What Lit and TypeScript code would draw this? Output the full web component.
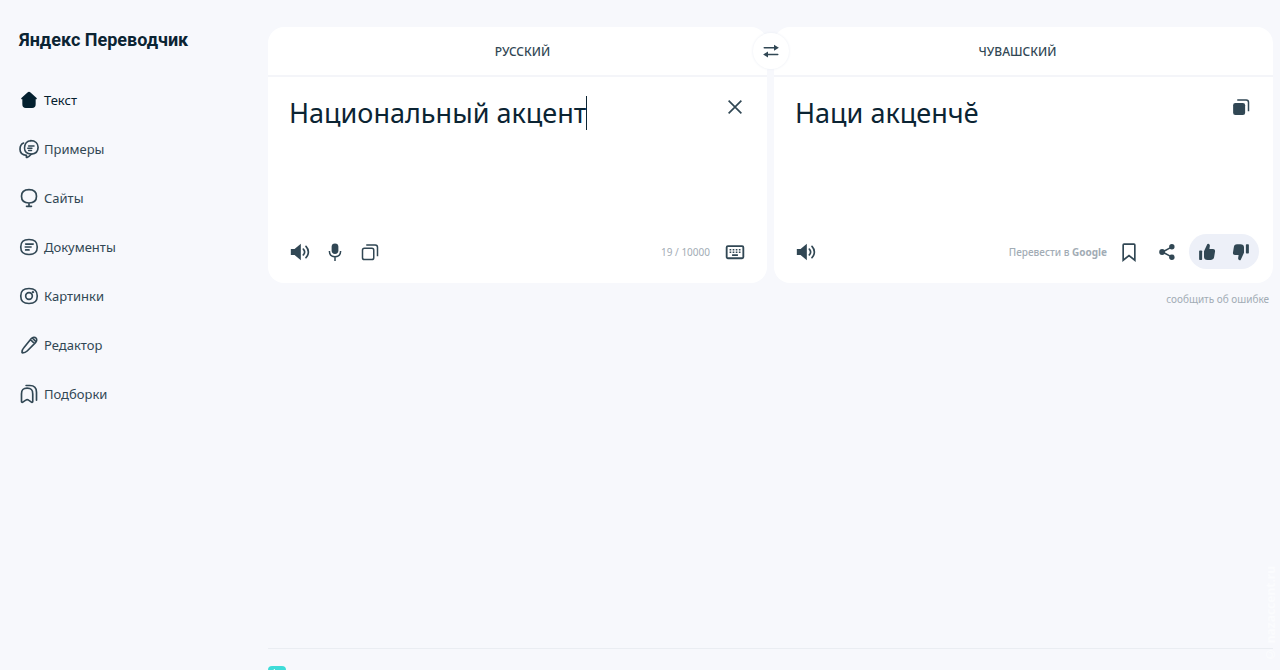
import { LitElement, html, css, svg } from "lit";
import { customElement, state } from "lit/decorators.js";

const line = (content: unknown, size = 24) => html`<svg
  width=${size} height=${size} viewBox="0 0 24 24" fill="none" stroke="currentColor"
  stroke-width="2" stroke-linecap="round" stroke-linejoin="round" aria-hidden="true">${content}</svg>`;

const icons = {
  text: line(svg`<path fill="currentColor" stroke="none" d="M10.2 3a2.700 2.700 0 0 1 3.600 0l7.300 6.700c.6.6.3 1.500-.6 1.500h-.5V17c0 3.100-1.500 4.500-4.300 4.500H8.200C5.400 21.500 4 20.100 4 17v-5.800h-.5c-.9 0-1.200-.9-.6-1.500z"/>`),
  examples: line(svg`<path d="M14 2c5.500 0 8.900 3.300 8.900 8s-3 7.900-8 8.100c-1.500 1.800-3.200 3.500-5.200 4-.8.200-1-.3-.9-1l.1-1.400C4.600 19.200 1.200 16.500 1.200 12.200 1.200 8.800 2.800 6 5.500 4.800"/><path d="M14.500 18c-5-.2-7.900-2.900-7.900-7.200C6.600 5.800 9.600 2 14 2M11.500 8.300h6.500M10.500 11h5M11.500 13.700h3.500" stroke-width="1.800"/>`),
  sites: line(svg`<path d="M12 2c6.300 0 9 2.700 9 8s-2.700 8-9 8-9-2.700-9-8 2.700-8 9-8zM12 18v3.500M9 22h6"/>`),
  documents: line(svg`<path d="M12 3c7.400 0 9.900 2.800 9.900 9s-2.500 9-9.900 9-9.900-2.800-9.900-9S4.600 3 12 3zM8 8.500h9M7.500 12h7M8 15.500h4"/>`),
  pictures: line(svg`<path d="M12 3c7.400 0 9.900 2.800 9.900 9s-2.500 9-9.900 9-9.900-2.800-9.900-9S4.600 3 12 3z"/><circle cx="12" cy="12" r="4"/><circle cx="16.600" cy="7.400" r="1" fill="currentColor" stroke-width="1"/>`),
  editor: line(svg`<path d="M14.800 4.200c1.700-1.700 4.300-1.900 5.600-.6s1.100 3.900-.6 5.600L9.800 19.200c-1.600 1.600-3.600 2.300-5.500 2.300-.5 0-.7-.2-.7-.7 0-1.900.7-3.900 2.200-5.500zM13.800 5.500l4.700 4.700M16 3.600l4.300 4.300"/>`),
  collections: line(svg`<path d="M3 12c0-5 1.700-7 6.800-7s6.700 2 6.700 7v9c0 .9-.9 1.300-1.600.7l-3.400-2.400c-1-.8-2.400-.8-3.400 0L4.600 21.700c-.7.600-1.600.2-1.600-.7zM8.500 1.800h4.500c5.500 0 8 2.800 8 8v9.700"/>`),
  swap: line(svg`<path d="M3 7.500h15M6 16.500h15"/><path stroke="none" fill="currentColor" d="M16 3.500l6.500 4-6.500 4zM8 12.500l-6.500 4 6.500 4z"/>`, 18),
  close: line(svg`<path stroke-width="2.200" stroke-linecap="butt" d="M3.500 3.500l17 17M20.500 3.500l-17 17"/>`, 18),
  sound: line(svg`<path fill="currentColor" stroke="none" d="M1 8.500h4.500L13 2v20l-7.500-6.500H1z"/><path d="M16 8.500c1.800 2 1.800 5 0 7M19.200 5.200c3.800 4 3.800 9.600 0 13.600"/>`, 20),
  mic: line(svg`<rect x="7.500" y="0.500" width="9" height="14" rx="4.500" fill="currentColor" stroke="none"/><path d="M4.500 10.500c0 5.500 3 7.700 7.500 7.700s7.500-2.200 7.500-7.700M12 18.500V24" stroke-linecap="butt"/>`, 18),
  copy: line(svg`<rect x="2" y="7" width="15" height="15" rx="2.500"/><path d="M7 2.500h12a3 3 0 0 1 3 3v12" stroke-linecap="butt"/>`, 18),
  copySolid: line(svg`<rect x="1.500" y="6.500" width="16" height="16" rx="3" fill="currentColor" stroke="none"/><path d="M7 2.500h12a3 3 0 0 1 3 3v12" stroke-linecap="butt"/>`, 18),
  keyboard: line(svg`<rect x="2" y="5" width="20" height="14.500" rx="1.500" stroke-width="2.200"/><path stroke-linecap="butt" d="M5.500 9.300h2M9.200 9.300h2M12.900 9.300h2M16.600 9.300h2M5.500 12.300h2M9.200 12.300h2M12.900 12.300h2M16.600 12.300h2M8.500 15.700h7"/>`, 20),
  bookmark: line(svg`<path stroke-linejoin="miter" d="M5 3.500a1 1 0 0 1 1-1h12a1 1 0 0 1 1 1v18.300l-7-5.500-7 5.500z"/>`, 20),
  share: line(svg`<path d="M18 5.500L6 12l12 6.500"/><g fill="currentColor" stroke="none"><circle cx="18.500" cy="5" r="3.600"/><circle cx="5.500" cy="12" r="3.900"/><circle cx="18.500" cy="19" r="3.600"/></g>`, 18),
  like: line(svg`<g fill="currentColor" stroke="none"><rect x="1.500" y="10" width="4" height="12.500" rx="1"/><path d="M8 11l4.300-9.200c.3-.6.8-.8 1.400-.7 1.500.3 2.300 1.500 2.100 3L15.200 8H20c2 0 3 1.300 2.700 3.200l-1.200 7.600c-.4 2.300-1.600 3.700-4.200 3.700h-4.500C9.700 22.500 8 21 8 18.500z"/></g>`, 18),
};

const sections = [
  { icon: icons.text, label: "Текст" },
  { icon: icons.examples, label: "Примеры" },
  { icon: icons.sites, label: "Сайты" },
  { icon: icons.documents, label: "Документы" },
  { icon: icons.pictures, label: "Картинки" },
  { icon: icons.editor, label: "Редактор" },
  { icon: icons.collections, label: "Подборки" },
];

@customElement("app-root")
export class AppRoot extends LitElement {
  @state() private source = "Национальный акцент";

  static styles = css`
    :host {
      position: relative;
      display: grid;
      grid-template-columns: 268px minmax(0, 1fr);
      height: 100vh;
      overflow-x: hidden;
      overflow-y: auto;
      scrollbar-width: none;
      background: #f7f8fc;
      color: #314754;
      font-family: "Noto Sans", "Open Sans", sans-serif;
      font-size: 13px;
      line-height: 20px;
    }
    * { box-sizing: border-box; }
    svg { display: block; flex: none; }
    a { color: inherit; text-decoration: none; }
    button { display: grid; place-items: center; padding: 0; border: 0; background: none; color: inherit; font: inherit; cursor: pointer; }
    .sidebar { padding: 27px 19px; }
    .logo { display: block; color: #0b2433; font-family: Roboto, "Noto Sans", sans-serif; font-size: 18px; font-weight: 700; line-height: 26px; white-space: nowrap; }
    .nav { display: grid; gap: 29px; margin: 0; padding: 37px 0 0; list-style: none; }
    .nav-link { display: flex; align-items: center; gap: 5px; }
    .nav-link svg { width: 20px; height: 20px; }
    .active { color: #04202f; }
    .main { display: flex; flex-direction: column; min-height: calc(100vh - 22px); padding: 27px 7px 0 0; }
    .panels { position: relative; display: grid; grid-template-columns: 1fr 1fr; gap: 7px; }
    .panel { display: flex; flex-direction: column; min-height: 256px; border-radius: 16px; background: #fff; }
    .language { height: 50px; padding-top: 1px; border-bottom: 2px solid #f4f5f9; font-size: 12px; font-weight: 500; text-transform: uppercase; }
    .language-source { padding-left: 10px; }
    .language-target { padding-right: 12px; }
    .swap { position: absolute; top: 6px; left: 50%; width: 36px; height: 36px; margin-left: -18px; border-radius: 50%; background: #fff; box-shadow: 0 0 3px #e9ecf3; }
    .body { display: flex; flex: 1; align-items: flex-start; padding: 19px 22px 19px 21px; }
    .entry { display: flex; flex: 1; min-width: 0; }
    .input { field-sizing: content; max-width: 100%; height: 34px; padding: 0; border: 0; outline: 0; resize: none; overflow: hidden; background: none; color: #0b2433; font: inherit; font-size: 27px; line-height: 34px; }
    .caret { width: 1px; height: 34px; background: #0b2433; }
    .output { flex: 1; margin: 0; color: #0b2433; font-size: 27px; line-height: 34px; }
    .corner { width: 20px; height: 22px; }
    .tools { display: flex; align-items: center; height: 35px; margin: 0 22px 14px; }
    .tools-source { gap: 15px; }
    .tools-target { gap: 18px; margin-right: 14px; }
    .tool { width: 20px; height: 20px; }
    .spacer { flex: 1; }
    .counter, .muted { color: #a2acb5; font-size: 10px; }
    .google { margin-right: -6px; font-weight: 500; }
    .rating { display: flex; align-items: center; gap: 14px; height: 35px; margin-left: -6px; padding: 0 8px; border-radius: 18px; background: #edf0f8; }
    .down svg { transform: rotate(180deg); }
    .report { align-self: flex-end; margin: 6px 4px 0 0; }
    .footer { grid-column: 2; height: 60px; margin-right: 7px; padding-top: 17px; border-top: 1px solid #eaedf2; }
    .app { display: grid; place-items: center; width: 18px; height: 18px; border-radius: 4px; background: #3fdcd8; color: #fff; }
    .credit { position: absolute; top: 566px; right: 0; color: #fbfcfe; font-size: 12px; font-weight: 700; line-height: 18px; writing-mode: vertical-rl; transform: rotate(180deg); pointer-events: none; }
  `;

  private onInput(event: InputEvent) {
    this.source = (event.target as HTMLTextAreaElement).value;
  }

  render() {
    return html`
      <aside class="sidebar">
        <a class="logo" href="#">Яндекс Переводчик</a>
        <nav>
          <ul class="nav">
            ${sections.map((item, index) => html`<li><a class="nav-link ${index === 0 ? "active" : ""}" href="#">${item.icon}${item.label}</a></li>`)}
          </ul>
        </nav>
      </aside>
      <main class="main">
        <div class="panels">
          <section class="panel">
            <button class="language language-source">Русский</button>
            <div class="body">
              <div class="entry">
                <textarea class="input" rows="1" aria-label="Исходный текст" spellcheck="false" .value=${this.source} @input=${this.onInput}></textarea>
                <span class="caret"></span>
              </div>
              <button class="corner" aria-label="Очистить">${icons.close}</button>
            </div>
            <div class="tools tools-source">
              <button class="tool" aria-label="Прослушать">${icons.sound}</button>
              <button class="tool" aria-label="Голосовой ввод">${icons.mic}</button>
              <button class="tool" aria-label="Копировать">${icons.copy}</button>
              <span class="spacer"></span>
              <span class="counter">${this.source.length} / 10000</span>
              <button class="tool" aria-label="Клавиатура">${icons.keyboard}</button>
            </div>
          </section>
          <section class="panel">
            <button class="language language-target">Чувашский</button>
            <div class="body">
              <p class="output">Наци акценчĕ</p>
              <button class="corner" aria-label="Копировать перевод">${icons.copySolid}</button>
            </div>
            <div class="tools tools-target">
              <button class="tool" aria-label="Прослушать перевод">${icons.sound}</button>
              <span class="spacer"></span>
              <a class="muted google" href="#">Перевести в <b>Google</b></a>
              <button class="tool" aria-label="В подборку">${icons.bookmark}</button>
              <button class="tool" aria-label="Поделиться">${icons.share}</button>
              <div class="rating">
                <button class="tool" aria-label="Хороший перевод">${icons.like}</button>
                <button class="tool down" aria-label="Плохой перевод">${icons.like}</button>
              </div>
            </div>
          </section>
          <button class="swap" aria-label="Поменять языки">${icons.swap}</button>
        </div>
        <a class="muted report" href="#">сообщить об ошибке</a>
      </main>
      <footer class="footer">
        <a class="app" href="#" aria-label="Приложение">${line(svg`<path d="M5 6h6M8 4v2M6 12c3-1 4-3 4.500-6"/>`, 16)}</a>
      </footer>
      <span class="credit">© nazaccent.ru</span>
    `;
  }
}
